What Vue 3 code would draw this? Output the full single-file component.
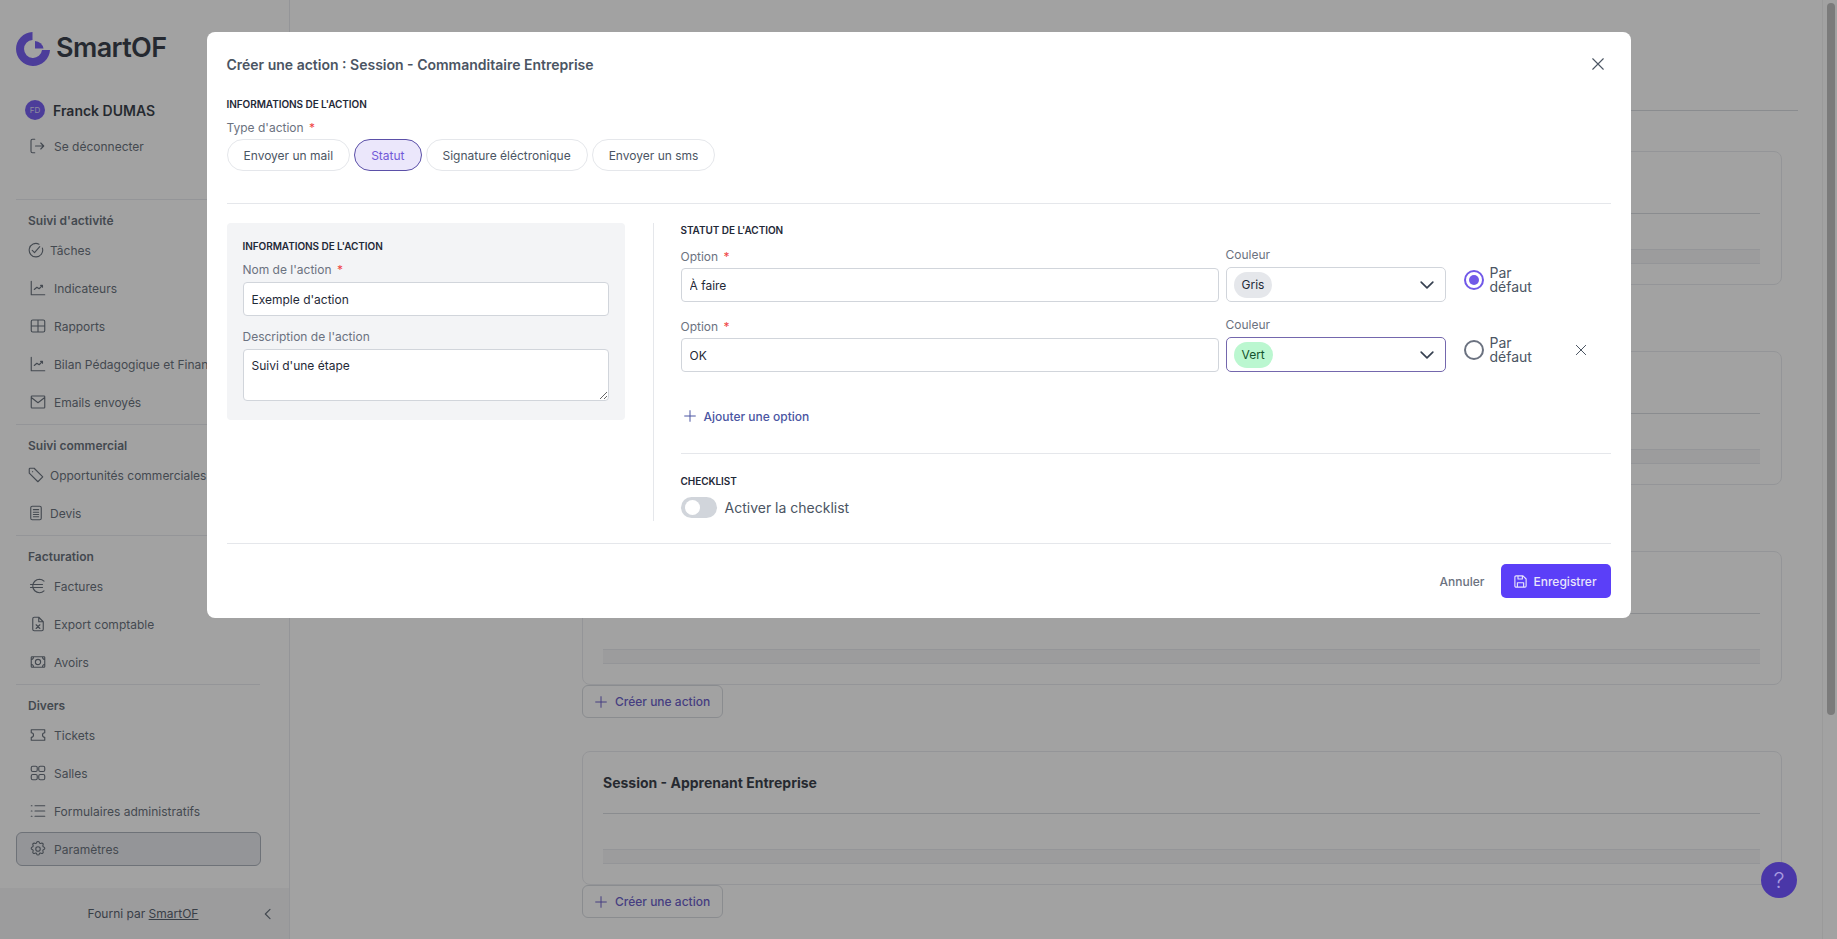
<script setup>
const groups = [
  { title: "Suivi d'activité", items: [
    { label: 'Tâches', icon: 'check', tight: true },
    { label: 'Indicateurs', icon: 'chart' },
    { label: 'Rapports', icon: 'table' },
    { label: 'Bilan Pédagogique et Financier', icon: 'chart' },
    { label: 'Emails envoyés', icon: 'mail' }
  ]},
  { title: 'Suivi commercial', items: [
    { label: 'Opportunités commerciales', icon: 'tag', tight: true },
    { label: 'Devis', icon: 'doc', tight: true }
  ]},
  { title: 'Facturation', items: [
    { label: 'Factures', icon: 'euro' },
    { label: 'Export comptable', icon: 'xls' },
    { label: 'Avoirs', icon: 'cash' }
  ]},
  { title: 'Divers', items: [
    { label: 'Tickets', icon: 'ticket' },
    { label: 'Salles', icon: 'grid' },
    { label: 'Formulaires administratifs', icon: 'list' },
    { label: 'Paramètres', icon: 'gear', active: true }
  ]}
]
const icons = {
  check: 'M7 12.5l3 3 7-8M20.5 9.5A9 9 0 1 1 16 4.2',
  chart: 'M3 3v18h18M7 14l3.5-3 3 2L18 8.5M15.5 8.5H18V11',
  table: 'M5 4h14a2 2 0 0 1 2 2v12a2 2 0 0 1-2 2H5a2 2 0 0 1-2-2V6a2 2 0 0 1 2-2zM12 4v16M3 12h18',
  mail: 'M4 4h16a1 1 0 0 1 1 1v14a1 1 0 0 1-1 1H4a1 1 0 0 1-1-1V5a1 1 0 0 1 1-1zM3 6l9 7 9-7',
  tag: 'M3 9.5V4a1 1 0 0 1 1-1h5.5L21 14.5 14.5 21zM7.5 7.5h.01',
  doc: 'M7 3h10a2 2 0 0 1 2 2v14a2 2 0 0 1-2 2H7a2 2 0 0 1-2-2V5a2 2 0 0 1 2-2zM8.5 7.5h7M8.5 11h7M8.5 14h7M8.5 17h7',
  euro: 'M20 5.5A9 9 0 0 0 14 3a9 9 0 0 0 0 18 9 9 0 0 0 6-2.5M2 10h16M2 14h16',
  xls: 'M13 3H7a2 2 0 0 0-2 2v14a2 2 0 0 0 2 2h10a2 2 0 0 0 2-2V9zM13 3v6h6M9.5 13l5 5M14.5 13l-5 5',
  cash: 'M4 5h16a1 1 0 0 1 1 1v12a1 1 0 0 1-1 1H4a1 1 0 0 1-1-1V6a1 1 0 0 1 1-1zM12 8.5a3.5 3.5 0 1 0 0 7 3.5 3.5 0 0 0 0-7zM3 9a4 4 0 0 0 3-4M21 9a4 4 0 0 1-3-4M3 15a4 4 0 0 1 3 4M21 15a4 4 0 0 0-3 4',
  ticket: 'M3 5h18v4a3 3 0 0 0 0 6v4H3v-4a3 3 0 0 0 0-6z',
  grid: 'M5 3h4a2 2 0 0 1 2 2v3a2 2 0 0 1-2 2H5a2 2 0 0 1-2-2V5a2 2 0 0 1 2-2zM15 3h4a2 2 0 0 1 2 2v3a2 2 0 0 1-2 2h-4a2 2 0 0 1-2-2V5a2 2 0 0 1 2-2zM5 14h4a2 2 0 0 1 2 2v3a2 2 0 0 1-2 2H5a2 2 0 0 1-2-2v-3a2 2 0 0 1 2-2zM15 14h4a2 2 0 0 1 2 2v3a2 2 0 0 1-2 2h-4a2 2 0 0 1-2-2v-3a2 2 0 0 1 2-2z',
  list: 'M8 5h13M8 12h13M8 19h13M3 5h1M3 12h1M3 19h1',
  gear: 'M10.3 3.3c.4-1.7 3-1.7 3.4 0a1.7 1.7 0 0 0 2.6 1.1c1.5-.9 3.3.8 2.4 2.4a1.7 1.7 0 0 0 1 2.5c1.8.5 1.8 3 0 3.4a1.7 1.7 0 0 0-1 2.6c.9 1.5-.9 3.3-2.4 2.4a1.7 1.7 0 0 0-2.6 1c-.4 1.8-3 1.8-3.4 0a1.7 1.7 0 0 0-2.6-1c-1.5.9-3.3-.9-2.4-2.4a1.7 1.7 0 0 0-1-2.6c-1.8-.4-1.8-2.9 0-3.4a1.7 1.7 0 0 0 1-2.5c-.9-1.6.9-3.3 2.4-2.4a1.7 1.7 0 0 0 2.6-1.1zM12 9a3 3 0 1 0 0 6 3 3 0 0 0 0-6z'
}
const cards = [
  { title: '' },
  { title: '' },
  { title: '', button: true },
  { title: 'Session - Apprenant Entreprise', button: true }
]
const actionTypes = ['Envoyer un mail', 'Statut', 'Signature éléctronique', 'Envoyer un sms']
const options = [
  { value: 'À faire', color: 'Gris', chip: 'chip-grey', checked: true },
  { value: 'OK', color: 'Vert', chip: 'chip-green', focused: true, removable: true }
]
</script>

<template>
  <div class="page">
    <aside class="sidebar">
      <div class="logo">
        <svg class="logo-mark" viewBox="0 0 34 34" width="34" height="34">
          <path fill="#5b3ff0" d="M16.500 0A17 17 0 1 0 34 18H26A9 9 0 1 1 16.500 8Z" />
          <path fill="#5b3ff0" d="M19 16.500V9A9 9 0 0 1 27.500 16.500Z" />
        </svg>
        <span class="logo-text">SmartOF</span>
      </div>
      <div class="user">
        <span class="avatar">FD</span>
        <span class="user-name">Franck DUMAS</span>
      </div>
      <div class="logout">
        <svg viewBox="0 0 24 24" width="18" height="18" class="nav-icon"><path d="M9 3H6a2 2 0 0 0-2 2v14a2 2 0 0 0 2 2h3M10 12h11M17 8l4 4-4 4" /></svg>
        <span>Se déconnecter</span>
      </div>
      <section v-for="g in groups" :key="g.title" class="group">
        <h3>{{ g.title }}</h3>
        <div
          v-for="it in g.items"
          :key="it.label"
          class="nav-item"
          :class="{ active: it.active, tight: it.tight }"
        >
          <svg viewBox="0 0 24 24" width="18" height="18" class="nav-icon"><path :d="icons[it.icon]" /></svg>
          <span class="nav-label">{{ it.label }}</span>
        </div>
      </section>
      <div class="side-footer">
        <span>Fourni par <u>SmartOF</u></span>
        <svg viewBox="0 0 24 24" width="16" height="16" class="chev"><path d="M15 5l-7 7 7 7" /></svg>
      </div>
    </aside>

    <main class="main">
      <h1 class="page-title">Param<span class="raised">è</span>tres</h1>
      <div class="tabs-line"></div>
      <div class="cards">
        <div v-for="(c, i) in cards" :key="i" class="card-block">
          <div class="card">
            <h2 class="card-title">{{ c.title }}</h2>
            <div class="card-rule"></div>
            <div class="card-stripe"></div>
          </div>
          <button v-if="c.button" class="create-btn">
            <svg viewBox="0 0 24 24" width="16" height="16"><path d="M12 4v16M4 12h16" /></svg>
            Créer une action
          </button>
        </div>
      </div>
    </main>

    <div class="track"><div class="thumb"></div></div>
    <div class="overlay"></div>
    <div class="help">?</div>

    <div class="modal-wrap">
      <div class="modal">
        <header class="modal-head">
          <h1>Créer une action : Session - Commanditaire Entreprise</h1>
          <svg viewBox="0 0 24 24" width="18" height="18" class="close"><path d="M5 5l14 14M19 5L5 19" /></svg>
        </header>

        <div class="type-section">
          <h4 class="caps">INFORMATIONS DE L'ACTION</h4>
          <label class="lbl">Type d'action <em>*</em></label>
          <div class="pills">
            <button v-for="t in actionTypes" :key="t" class="pill" :class="{ on: t === 'Statut' }">{{ t }}</button>
          </div>
        </div>

        <div class="body">
          <div class="left-panel">
            <h4 class="caps">INFORMATIONS DE L'ACTION</h4>
            <label class="lbl">Nom de l'action <em>*</em></label>
            <input class="field" value="Exemple d'action" />
            <label class="lbl second">Description de l'action</label>
            <textarea class="field area">Suivi d'une étape</textarea>
          </div>

          <div class="right-panel">
            <h4 class="caps">STATUT DE L'ACTION</h4>
            <div v-for="o in options" :key="o.value" class="opt-row">
              <div class="opt-col">
                <label class="lbl">Option <em>*</em></label>
                <input class="field" :value="o.value" />
              </div>
              <div class="color-col">
                <label class="lbl">Couleur</label>
                <div class="select" :class="{ focused: o.focused }">
                  <span class="chip" :class="o.chip">{{ o.color }}</span>
                  <svg viewBox="0 0 24 24" width="20" height="20" class="chev2"><path d="M5 8.500l7 7 7-7" /></svg>
                </div>
              </div>
              <div class="radio-col">
                <span class="radio" :class="{ checked: o.checked }"></span>
                <span class="radio-text">Par<br />défaut</span>
              </div>
              <svg v-if="o.removable" viewBox="0 0 24 24" width="16" height="16" class="remove"><path d="M5 5l14 14M19 5L5 19" /></svg>
            </div>
            <div class="add-option">
              <svg viewBox="0 0 24 24" width="16" height="16"><path d="M12 4v16M4 12h16" /></svg>
              Ajouter une option
            </div>
            <div class="rule"></div>
            <h4 class="caps">CHECKLIST</h4>
            <div class="check-row">
              <span class="toggle"><span class="knob"></span></span>
              <span>Activer la checklist</span>
            </div>
          </div>
        </div>

        <footer class="modal-foot">
          <button class="cancel">Annuler</button>
          <button class="save">
            <svg viewBox="0 0 24 24" width="15" height="15"><path d="M5 3h11l5 5v11a2 2 0 0 1-2 2H5a2 2 0 0 1-2-2V5a2 2 0 0 1 2-2zM8 3v5h7V3M7 21v-7h10v7" /></svg>
            Enregistrer
          </button>
        </footer>
      </div>
    </div>
  </div>
</template>

<style>
html, body { margin: 0; height: 939px; overflow: hidden; }
</style>

<style scoped>
* { box-sizing: border-box; }
.page {
  position: relative;
  width: 1837px;
  height: 939px;
  overflow: hidden;
  display: flex;
  font-family: Inter, "Liberation Sans", sans-serif;
  background: #fff;
  color: #374151;
}

/* Sidebar */
.sidebar {
  position: relative;
  width: 290px;
  flex: none;
  height: 939px;
  background: #fff;
  border-right: 1px solid #e5e7eb;
  display: flex;
  flex-direction: column;
}
.logo { display: flex; align-items: center; gap: 6px; margin: 32px 0 0 16px; height: 34px; }
.logo-mark { flex: none; }
.logo-text { font-size: 27px; font-weight: 600; letter-spacing: -0.6px; color: #111827; line-height: 34px; position: relative; top: -1px; }
.user { display: flex; align-items: center; gap: 8px; margin: 33px 0 0 25px; height: 22px; }
.avatar {
  width: 20px; height: 20px; border-radius: 50%;
  background: #5b3ff0; color: #d8d4f5;
  font-size: 8px; display: flex; align-items: center; justify-content: center;
}
.user-name { font-size: 14px; font-weight: 600; color: #111827; }
.logout { display: flex; align-items: center; gap: 8px; margin: 14px 0 0 28px; height: 22px; font-size: 12px; color: #4b5563; }
.nav-icon { flex: none; fill: none; stroke: #4b5563; stroke-width: 1.5; stroke-linecap: round; stroke-linejoin: round; }
.group { margin: 0 29px 0 16px; border-top: 1px solid #e5e7eb; padding: 13px 0 3px; }
.logout + .group { margin-top: 42px; }
.group h3 { margin: 0 0 0 12px; font-size: 12px; line-height: 16px; font-weight: 600; color: #4b5563; }
.nav-item {
  display: flex; align-items: center; gap: 7px;
  height: 38px; padding-left: 12px;
  font-size: 12px; color: #4b5563; white-space: nowrap;
  border: 1px solid transparent; border-radius: 6px;
  width: 245px;
}
.group h3 + .nav-item { margin-top: 2px; }
.nav-item.tight { gap: 5px; padding-left: 10px; }
.nav-item.active { background: #e5e7eb; border-color: #9ca3af; height: 34px; margin-top: 2px; }
.side-footer {
  position: absolute; left: 0; right: 0; bottom: 0; height: 51px;
  background: #f3f4f6;
  display: flex; align-items: center; justify-content: center;
  font-size: 12px; color: #374151; padding-right: 3px;
}
.chev { position: absolute; right: 13px; fill: none; stroke: #4b5563; stroke-width: 1.8; stroke-linecap: round; stroke-linejoin: round; }

/* Main */
.main { flex: 1; min-width: 0; position: relative; }
.page-title { margin: 30px 0 0 38px; height: 24px; font-size: 20px; line-height: 24px; font-weight: 600; color: #111827; }
.raised { position: relative; top: -2px; }
.tabs-line { height: 1px; margin: 56px 39px 0 0; background: #d1d5db; }
.cards { margin: 40px 0 0 292px; width: 1200px; display: flex; flex-direction: column; gap: 66px; }
.card-block { height: 134px; position: relative; }
.card {
  height: 134px;
  border: 1px solid #e5e7eb; border-radius: 8px; background: #fff;
  padding: 0 21px 0 20px;
}
.card-title { height: 61px; margin: 0; padding-top: 21px; font-size: 14px; line-height: 20px; font-weight: 700; color: #111827; }
.card-rule { height: 1px; background: #d1d5db; }
.card-stripe { height: 15px; margin-top: 35px; background: #f3f4f6; border-top: 1px solid #e5e7eb; border-bottom: 1px solid #e5e7eb; }
.create-btn {
  position: absolute; left: 0; top: 134px;
  display: flex; align-items: center; gap: 6px;
  width: 141px; height: 33px; padding: 0 0 0 10px;
  background: #fff; border: 1px solid #d1d5db; border-radius: 6px;
  font: 500 12px Inter, sans-serif; color: #4f3fc0;
}
.create-btn svg, .add-option svg { fill: none; stroke: currentColor; stroke-width: 1.5; stroke-linecap: round; }

.track { position: absolute; right: 0; top: 0; bottom: 0; width: 15px; background: #fff; border-left: 1px solid #f0f0f0; }
.thumb { position: absolute; top: 3px; left: 4px; width: 8px; height: 712px; background: #b4b4b4; border-radius: 4px; }
.overlay { position: absolute; inset: 0; background: rgba(60, 60, 60, 0.48); }
.help {
  position: absolute; left: 1761px; top: 862px; width: 36px; height: 36px; border-radius: 50%;
  background: #4a37a8; color: #a89be0; font-size: 22px; font-weight: 300;
  display: flex; align-items: center; justify-content: center;
}

/* Modal */
.modal-wrap { position: absolute; inset: 0; display: flex; justify-content: center; align-items: flex-start; padding-top: 32px; }
.modal { width: 1424px; height: 586px; background: #fff; border-radius: 8px; padding: 0 20px; }
.modal-head { height: 65px; display: flex; align-items: center; justify-content: space-between; }
.modal-head h1 { margin: 0; font-size: 14px; font-weight: 600; color: #4b5563; }
.close { fill: none; stroke: #4b5563; stroke-width: 1.5; stroke-linecap: round; margin-right: 4px; margin-top: -2px; }
.caps { margin: 0; font-size: 10px; line-height: 14px; font-weight: 600; letter-spacing: -0.06px; color: #1f2937; }
.lbl { display: block; font-size: 12px; line-height: 18px; color: #6b7280; }
.lbl em { font-style: normal; color: #ef4444; margin-left: 2px; }
.type-section { height: 107px; border-bottom: 1px solid #e5e7eb; }
.type-section .lbl { margin-top: 8px; }
.pills { display: flex; gap: 4px; margin-top: 2px; }
.pill {
  height: 32px; padding: 0 16px; border: 1px solid #e5e7eb; border-radius: 16px; background: #fff;
  font: 400 12px Inter, sans-serif; color: #4b5563;
}
.pill.on { background: #ebe7fb; border-color: #5b50a8; color: #7159d8; }

.body { display: flex; padding-top: 19px; height: 340px; border-bottom: 1px solid #e5e7eb; }
.left-panel { width: 398px; height: 197px; flex: none; background: #f3f4f6; border-radius: 4px; padding: 16px 16px; }
.left-panel .lbl { margin-top: 8px; }
.left-panel .lbl.second { margin-top: 12px; }
.field {
  display: block; width: 100%; height: 34px; padding: 0 8px;
  background: #fff; border: 1px solid #d1d5db; border-radius: 4px;
  font: 400 12px Inter, sans-serif; color: #1f2937; outline: none;
}
.left-panel .lbl + .field { margin-top: 3px; }
.area { height: 52px; padding-top: 8px; line-height: 16px; resize: vertical; }
.right-panel { flex: 1; margin-left: 28px; border-left: 1px solid #e5e7eb; padding-left: 27px; height: 298px; }
.right-panel > .caps { margin-bottom: 6px; }
.opt-row { display: flex; align-items: flex-start; height: 70px; position: relative; }
.opt-col { width: 538px; flex: none; }
.opt-col .lbl { margin-top: 5px; margin-bottom: 2px; }
.color-col { width: 220px; margin-left: 7px; flex: none; }
.color-col .lbl { margin-top: 3px; margin-bottom: 3px; }
.select {
  display: flex; align-items: center; justify-content: space-between;
  height: 35px; padding: 0 8px 0 7px; border: 1px solid #d1d5db; border-radius: 5px; background: #fff;
}
.select.focused { border-color: #7467ad; }
.chip { display: flex; align-items: center; height: 26px; padding: 0 8px; border-radius: 13px; font-size: 12px; color: #1f2937; }
.chip-grey { background: #e5e7eb; }
.chip-green { background: #bbf7d0; color: #14532d; }
.chev2 { fill: none; stroke: #374151; stroke-width: 2; stroke-linecap: round; stroke-linejoin: round; }
.radio-col { display: flex; align-items: center; gap: 6px; margin: 23px 0 0 18px; font-size: 14px; line-height: 14px; color: #4b5563; }
.radio { width: 20px; height: 20px; border: 2px solid #6b7280; border-radius: 50%; background: #fff; display: block; position: relative; }
.radio.checked { border-color: #7159e8; }
.radio.checked::after { content: ""; position: absolute; inset: 3px; border-radius: 50%; background: #7159e8; }
.radio-text { display: block; }
.remove { position: absolute; left: 892px; top: 29px; fill: none; stroke: #4b5563; stroke-width: 1.5; stroke-linecap: round; }
.add-option { display: flex; align-items: center; gap: 6px; margin-top: 23px; height: 20px; font-size: 12px; font-weight: 500; color: #4a55a2; padding-left: 1px; }
.rule { height: 1px; background: #e5e7eb; margin: 27px 0 20px; }
.check-row { display: flex; align-items: center; gap: 8px; margin-top: 8px; font-size: 14px; color: #4b5563; height: 22px; }
.toggle { width: 36px; height: 21px; border-radius: 11px; background: #d1d5db; position: relative; display: block; }
.knob { position: absolute; left: 4px; top: 3px; width: 15px; height: 15px; border-radius: 50%; background: #fff; }

.modal-foot { display: flex; justify-content: flex-end; align-items: center; gap: 16px; padding-top: 20px; }
.cancel { background: none; border: 0; font: 500 12px Inter, sans-serif; color: #6b7280; padding: 0; }
.save {
  display: flex; align-items: center; gap: 6px; height: 34px; width: 110px; padding: 0 0 0 12px;
  background: #5b3ff8; border: 0; border-radius: 5px; color: #e8e5fb; font: 500 12px Inter, sans-serif;
}
.save svg { fill: none; stroke: currentColor; stroke-width: 1.8; stroke-linejoin: round; }
</style>
